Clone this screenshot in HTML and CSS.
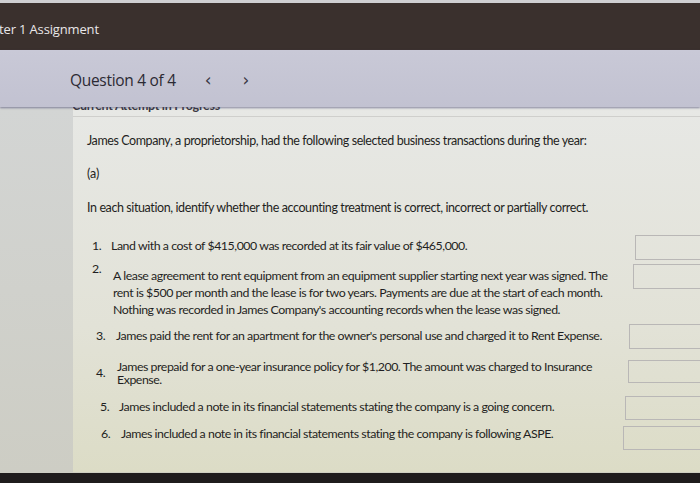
FILE: index.html
```html
<!DOCTYPE html>
<html>
<head>
<meta charset="utf-8">
<link rel="stylesheet" href="styles.css">
</head>
<body>
<div class="page">
  <div class="topstrip"></div>
  <div class="titlebar"><span class="title">ter 1 Assignment</span></div>
  <div class="qbar">
    <span class="qlabel">Question 4 of 4</span>
    <span class="nav prev">&lsaquo;</span>
    <span class="nav next">&rsaquo;</span>
  </div>
  <div class="body">
    <div class="side"></div>
    <div class="content">
      <div class="attempt">Current Attempt in Progress</div>
      <div class="rule"></div>
      <p class="intro">James Company, a proprietorship, had the following selected business transactions during the year:</p>
      <p class="part">(a)</p>
      <p class="instr">In each situation, identify whether the accounting treatment is correct, incorrect or partially correct.</p>
      <div class="items">
        <div class="item i1">
          <span class="num">1.</span>
          <span class="text">Land with a cost of $415,000 was recorded at its fair value of $465,000.</span>
          <span class="box"></span>
        </div>
        <div class="item i2">
          <span class="num">2.</span>
          <span class="text">A lease agreement to rent equipment from an equipment supplier starting next year was signed. The rent is $500 per month and the lease is for two years. Payments are due at the start of each month. Nothing was recorded in James Company's accounting records when the lease was signed.</span>
          <span class="box"></span>
        </div>
        <div class="item i3">
          <span class="num">3.</span>
          <span class="text">James paid the rent for an apartment for the owner's personal use and charged it to Rent Expense.</span>
          <span class="box"></span>
        </div>
        <div class="item i4">
          <span class="num">4.</span>
          <span class="text">James prepaid for a one-year insurance policy for $1,200. The amount was charged to Insurance Expense.</span>
          <span class="box"></span>
        </div>
        <div class="item i5">
          <span class="num">5.</span>
          <span class="text">James included a note in its financial statements stating the company is a going concern.</span>
          <span class="box"></span>
        </div>
        <div class="item i6">
          <span class="num">6.</span>
          <span class="text">James included a note in its financial statements stating the company is following ASPE.</span>
          <span class="box"></span>
        </div>
      </div>
    </div>
  </div>
  <div class="bottombar"></div>
</div>
</body>
</html>
```
FILE: styles.css
```css
* { box-sizing: border-box; }
html, body { margin: 0; padding: 0; }
body { width: 700px; height: 483px; overflow: hidden; background: #dcdcd2; }
.page { display: flex; flex-direction: column; height: 483px; }
.topstrip { height: 3px; background: #cfcfd2; }
.titlebar {
  height: 47px; background: #3a302d;
  display: flex; align-items: center;
  padding-top: 4px;
}
.title {
  font-family: "Open Sans", sans-serif; font-size: 13px; color: #e9e6e8;
  margin-left: -1px; letter-spacing: -0.15px;
}
.qbar {
  height: 57px; background: linear-gradient(#c9c9d7, #c2c2d1);
  display: flex; align-items: center; padding-left: 70px; padding-top: 3px;
  box-shadow: 0 1px 2px rgba(70,70,110,0.6);
  position: relative; z-index: 2;
}
.qlabel { font-family: "Open Sans", sans-serif; font-size: 15.5px; color: #2c2a33; letter-spacing: -0.3px; }
.nav { font-family: "DejaVu Sans", sans-serif; font-size: 17px; color: #3a3845; }
.prev { margin-left: 29px; }
.next { margin-left: 31px; }
.body { flex: 1; display: flex; min-height: 0; }
.side { width: 73px; background: linear-gradient(#d3d5d4, #cdcdc4); }
.content {
  flex: 1; background: linear-gradient(#e7e8e5, #e2e2d7 60%, #dcdcc6);
  font-family: Lato, sans-serif; color: #1f1f22;
  padding-left: 14px; overflow: hidden;
  border-bottom: 1px solid #cfcfc2;
}
.attempt {
  font-family: Lato, sans-serif; font-weight: 700; font-size: 12.5px; color: #3a3840;
  margin-top: -7px; margin-left: -15px; height: 8px; line-height: 11px;
  letter-spacing: -0.3px; white-space: nowrap;
}
.rule { height: 1px; background: #cfcfcc; margin: 8px 0 0 -14px; }
p { margin: 0; }
.intro { font-size: 12.5px; letter-spacing: -0.42px; margin-top: 16px; line-height: 15px; }
.part { font-size: 12.5px; margin-top: 18px; line-height: 15px; }
.instr { font-size: 12.5px; letter-spacing: -0.4px; margin-top: 19px; line-height: 15px; }
.items { margin-top: 18px; display: flex; flex-direction: column; }
.item { display: flex; align-items: flex-start; font-size: 12.35px; letter-spacing: -0.45px; line-height: 16px; }
.num { width: 19px; flex: none; }
.text { flex: none; }
.box { margin-left: auto; flex: none; height: 25px; border: 1px solid #b9b7b6; border-right: none; }
.i1 { padding-left: 5px; height: 30px; }
.i1 .text { width: 490px; margin-top: 5px; }
.i1 .num { margin-top: 5px; }
.i1 .box { width: 65px; margin-top: 2px; }
.i2 { padding-left: 5px; height: 63px; }
.i2 .num { margin-top: -2px; width: 21px; }
.i2 .text { width: 500px; margin-top: 4px; line-height: 17px; }
.i2 .box { width: 67px; margin-top: 1px; }
.i3 { padding-left: 9px; height: 35px; }
.i3 .num { margin-top: 2px; width: 20px; }
.i3 .text { width: 490px; margin-top: 2px; }
.i3 .box { width: 71px; margin-top: -2px; }
.i4 { padding-left: 9px; height: 35px; }
.i4 .num { margin-top: 4px; width: 21px; }
.i4 .text { width: 492px; margin-top: -1px; line-height: 13px; }
.i4 .box { width: 72px; height: 23px; margin-top: -1px; }
.i5 { padding-left: 13px; height: 29px; }
.i5 .num { margin-top: 3px; width: 19px; }
.i5 .text { width: 480px; margin-top: 3px; }
.i5 .box { width: 75px; height: 24px; }
.i6 { padding-left: 14px; height: 30px; }
.i6 .num { margin-top: 1px; width: 20px; }
.i6 .text { width: 480px; margin-top: 1px; }
.i6 .box { width: 77px; height: 24px; margin-top: 1px; }
.bottombar { height: 10px; background: #1f1c1d; flex: none; }
```
